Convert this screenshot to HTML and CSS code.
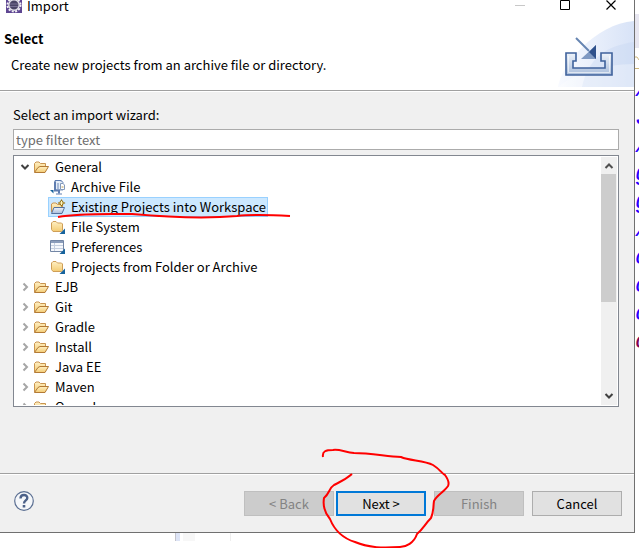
FILE: index.html
```html
<!DOCTYPE html>
<html lang="en">
<head>
  <meta charset="UTF-8" />
  <meta name="viewport" content="width=device-width, initial-scale=1.0" />
  <title>Import</title>
  <link rel="stylesheet" href="styles.css">
</head>
<body>
  <svg class="defs" aria-hidden="true">
    <defs>
      <linearGradient id="gold" x1="0" y1="0" x2="0" y2="1">
        <stop offset="0" stop-color="#fff0c4" />
        <stop offset="1" stop-color="#f3cb72" />
      </linearGradient>
      <linearGradient id="steel" x1="0" y1="0" x2="0" y2="1">
        <stop offset="0" stop-color="#eef3fa" />
        <stop offset="1" stop-color="#a9bddb" />
      </linearGradient>
    </defs>
    <symbol id="open" viewBox="0 0 16 16">
      <path d="M.5 13V4.500L2 3H5L6.500 4.500H11.500V7.500" fill="url(#gold)" stroke="#c99450" />
      <path d="M.5 13.500L4 8.500L6 7.500H14.500L11 13.500Z" fill="url(#gold)" stroke="#b37a36" stroke-linejoin="round" />
    </symbol>
    <symbol id="folder" viewBox="0 0 16 16">
      <path d="M1.500 10.500V4L3 2.500H6L7.500 4H11.500L12.500 5V11.500L11.500 12.500H3Z" fill="url(#gold)" stroke="#cf9f58" />
      <path d="M15 9.500V15H9.500Z" fill="#17639c" />
    </symbol>
    <symbol id="archive" viewBox="0 0 16 16">
      <path d="M5 1.500H10L13 3V11H5Z" fill="#e5edf7" stroke="#7f97c0" />
      <path d="M5 2.500V11.500H9V14.500" fill="none" stroke="#5f7db0" stroke-width="2" />
      <path d="M5 1.500H11.500M6 15H12" stroke="#5f7db0" />
      <path d="M8 4V10" stroke="#6f89b7" />
      <path d="M10.500 4.500H13L14.500 6V10.500H10.500Z" fill="#fff" stroke="#849abb" />
      <path d="M11.500 8H13.500" stroke="#b99a51" />
      <path d="M0 11H3.500V14.500Z" fill="#17639c" />
    </symbol>
    <symbol id="project" viewBox="0 0 16 16">
      <path d="M1.500 13V5L3 4H6L7.500 5.500H12.500V8" fill="url(#gold)" stroke="#c99450" />
      <path d="M1.500 14.500L4 8.500H14.500L12 14.500Z" fill="url(#steel)" stroke="#54729f" />
      <path d="M11.500 0L13 2.500L15.500 4L13 5.500L11.500 8L10 5.500L7.500 4L10 2.500Z" fill="#94731b" />
      <path d="M11.500 2V6M9.500 4H13.500" stroke="#fff6bd" />
    </symbol>
    <symbol id="prefs" viewBox="0 0 16 16">
      <path d="M.5 1.500H13.500V12.500H.5Z" fill="#f5f8fc" stroke="#7386a5" />
      <path d="M1 2H13V4H1Z" fill="#8b9dbb" />
      <path d="M4.500 4V12M1 6.500H13M1 9.500H13" stroke="#c5cfdf" />
      <path d="M15 9.500V15H9.500Z" fill="#17639c" />
    </symbol>
    <symbol id="down" viewBox="0 0 10 10"><path d="M1.500 3L5 6.500L8.500 3" fill="none" stroke="#404040" stroke-width="2" /></symbol>
    <symbol id="right" viewBox="0 0 10 10"><path d="M3.500 1.500L7 5L3.500 8.500" fill="none" stroke="#a6a6a6" stroke-width="2" /></symbol>
    <symbol id="up" viewBox="0 0 10 10"><path d="M1.500 7L5 3.500L8.500 7" fill="none" stroke="#505050" stroke-width="2" /></symbol>
  </svg>

  <div class="editor" aria-hidden="true">
    <div class="code"><i>/</i><i>J</i><i>/</i><i>g</i><i>g</i><i>/</i><i>o</i><i>o</i><i>o</i><i class="keyword">c</i></div>
    <svg class="outline" width="4" height="72" viewBox="0 0 4 72"><path d="M0 0H4V34H0Z" fill="#e7e6f0" /><path d="M0 43H2L4 46M0 54.500H4" fill="none" stroke="#ceb77c" /></svg>
    <div class="ruler"></div>
  </div>

  <main class="dialog">
    <div class="titlebar">
      <svg class="logo" width="16" height="16" viewBox="0 0 16 16">
        <path d="M0 0H16V16H0Z" fill="#5e4692" />
        <circle cx="8" cy="8" r="6.500" fill="none" stroke="#f2f0f5" stroke-width="2" stroke-dasharray="2 1.400" />
        <circle cx="8" cy="8" r="5.200" fill="#4a4466" stroke="#e3e1e9" stroke-width="1.400" />
        <path d="M4 7H12M4 9.500H12" stroke="#776f94" />
      </svg>
      <span class="caption">Import</span>
      <svg class="winbtns" width="102" height="12" viewBox="0 0 102 12">
        <path d="M0 5.500H10" stroke="#c8c8c8" />
        <path d="M45.500 .5H54.500V9.500H45.500Z" fill="none" stroke="#000" />
        <path d="M91.500 .5L100.500 9.500M100.500 .5L91.500 9.500" stroke="#000" stroke-width="1.200" />
      </svg>
    </div>

    <header class="banner">
      <div class="intro">
        <h1>Select</h1>
        <p>Create new projects from an archive file or directory.</p>
      </div>
      <svg class="art" width="76" height="68" viewBox="0 0 76 68">
        <defs>
          <linearGradient id="sky" x1="0" x2="1"><stop offset="0" stop-color="#f8faff" /><stop offset="1" stop-color="#d8e3f7" /></linearGradient>
        </defs>
        <path d="M0 67C3 45 37 4 76 1V67Z" fill="url(#sky)" />
        <path d="M24 67C30 39 47 26 76 22V67Z" fill="#c4d5f2" opacity=".35" />
        <path d="M0 67C20 51 45 45 76 44V67Z" fill="#fff" opacity=".3" />
        <path d="M8 33H18V41H15V48H47V41H43V33H54V55H8Z" fill="url(#steel)" stroke="#3f629c" stroke-width="1.600" />
        <path d="M10.500 36V52.500H51.500V36" fill="none" stroke="#fff" stroke-opacity=".6" />
        <path d="M18 18L31 31" stroke="#6685b2" stroke-width="2" />
        <path d="M38 25V39H23Z" fill="#7f99c2" />
        <path d="M38 25V39L31 32Z" fill="#2e508b" />
      </svg>
    </header>

    <section class="content">
      <label for="filter">Select an import wizard:</label>
      <input id="filter" type="text" placeholder="type filter text">
      <div class="tree">
        <ul class="items">
          <li><svg class="arrow"><use href="#down" /></svg><svg class="icon"><use href="#open" /></svg><span>General</span></li>
          <li class="child"><svg class="icon"><use href="#archive" /></svg><span>Archive File</span></li>
          <li class="child selected"><svg class="icon"><use href="#project" /></svg><span>Existing Projects into Workspace</span></li>
          <li class="child"><svg class="icon"><use href="#folder" /></svg><span>File System</span></li>
          <li class="child"><svg class="icon"><use href="#prefs" /></svg><span>Preferences</span></li>
          <li class="child"><svg class="icon"><use href="#folder" /></svg><span>Projects from Folder or Archive</span></li>
          <li><svg class="arrow"><use href="#right" /></svg><svg class="icon"><use href="#open" /></svg><span>EJB</span></li>
          <li><svg class="arrow"><use href="#right" /></svg><svg class="icon"><use href="#open" /></svg><span>Git</span></li>
          <li><svg class="arrow"><use href="#right" /></svg><svg class="icon"><use href="#open" /></svg><span>Gradle</span></li>
          <li><svg class="arrow"><use href="#right" /></svg><svg class="icon"><use href="#open" /></svg><span>Install</span></li>
          <li><svg class="arrow"><use href="#right" /></svg><svg class="icon"><use href="#open" /></svg><span>Java EE</span></li>
          <li><svg class="arrow"><use href="#right" /></svg><svg class="icon"><use href="#open" /></svg><span>Maven</span></li>
          <li><svg class="arrow"><use href="#right" /></svg><svg class="icon"><use href="#open" /></svg><span>Oomph</span></li>
        </ul>
        <div class="scrollbar">
          <svg class="arrow"><use href="#up" /></svg>
          <div class="track"><div class="thumb"></div></div>
          <svg class="arrow"><use href="#down" /></svg>
        </div>
      </div>
    </section>

    <footer class="actions">
      <button class="help" aria-label="Help">
        <svg width="20" height="20" viewBox="0 0 20 20">
          <circle cx="10" cy="10" r="9.300" fill="#f5f7fa" stroke="#5b6f92" stroke-width="1.200" />
          <path d="M6.500 7.500C6.500 3 13.500 3 13.300 7C13.200 9.500 10 9.500 10 12.500" fill="none" stroke="#4c6189" stroke-width="2.400" />
          <path d="M8.700 14H11.300V16.500H8.700Z" fill="#4c6189" />
        </svg>
      </button>
      <div class="pair">
        <button disabled>&lt; Back</button>
        <button class="primary">Next &gt;</button>
      </div>
      <button disabled>Finish</button>
      <button>Cancel</button>
    </footer>
  </main>

  <svg class="marks" width="639" height="548" viewBox="0 0 639 548" aria-hidden="true">
    <path d="M58 217C80 213 104 214 132 214C166 217 202 219 237 216C254 214 272 215 290 216" />
    <path d="M323 457C322 451 326 450 333 450C339 449 345 452 354 453C370 453 385 456 401 457C410 461 424 460 433 465C441 470 441 473 445 475Q450 482 448 486C444 492 437 495 434 501C433 507 434 511 431 518C425 524 423 529 417 534C414 543 406 547 400 547C383 548 369 548 355 542C342 538 334 529 330 519C324 512 323 504 324 498C330 493 329 488 334 485C340 482 345 480 352 474" />
  </svg>
</body>
</html>
```
FILE: styles.css
```css
* {
  box-sizing: border-box;
}
body {
  margin: 0;
  min-height: 100vh;
  padding-right: 4px;
  position: relative;
  overflow: hidden;
  background: #fff;
  color: #000;
  font-family: "Noto Sans CJK SC", "Noto Sans", sans-serif;
  font-size: 13px;
  line-height: 20px;
}
h1, p, ul {
  margin: 0;
  padding: 0;
}
.defs {
  position: absolute;
  width: 0;
  height: 0;
}

/* editor window peeking out behind the dialog */
.code {
  position: absolute;
  top: 76px;
  right: 0;
  width: 4px;
  overflow: hidden;
  color: #2a00ff;
  font: 24px/28px "Liberation Mono", monospace;
}
.code i {
  display: block;
}
.code .keyword {
  color: #7f0055;
}
.outline {
  position: absolute;
  top: 14px;
  right: 0;
}
.ruler {
  position: absolute;
  top: 533px;
  left: 175px;
  width: 56px;
  height: 8px;
  border-left: 1px solid #c4c4cc;
  border-right: 1px solid #eee;
  background: linear-gradient(to right, #dde4f6 4px, #fff 4px, #fff 7px, #f7f7f7 7px, #f7f7f7 19px, #fff 19px);
}

.dialog {
  position: relative;
  background: #f0f0f0;
  border-right: 1px solid #707070;
  border-bottom: 1px solid #707070;
}
.titlebar {
  display: flex;
  align-items: center;
  height: 12px;
  padding: 0 17px 0 6px;
  background: #fff;
}
.logo {
  margin-bottom: 2px;
}
.caption {
  flex: 1;
  margin-left: 5px;
}
.banner {
  display: flex;
  justify-content: space-between;
  height: 79px;
  padding-top: 8px;
  background: #fff;
  border-bottom: 1px solid #a0a0a0;
  box-shadow: 0 1px #fff;
}
.intro {
  padding: 9px 0 0 4px;
}
.intro h1 {
  font-size: 13px;
  line-height: 20px;
}
.intro p {
  padding: 6px 0 0 7px;
}
.content {
  display: flex;
  flex-direction: column;
  padding: 14px 15px 66px 13px;
}
.content input {
  width: 100%;
  height: 21px;
  margin-top: 4px;
  padding: 0 2px;
  border: 1px solid #ababab;
  background: #fff;
  font: inherit;
}
.content input::placeholder {
  color: #6d6d6d;
  opacity: 1;
}
.tree {
  display: flex;
  height: 252px;
  margin-top: 5px;
  padding: 1px;
  border: 1px solid #828790;
  background: #fff;
  overflow: hidden;
}
.items {
  flex: 1;
  overflow: hidden;
  list-style: none;
}
.items li {
  display: flex;
  align-items: center;
  width: max-content;
  height: 20px;
  padding: 0 2px 0 5px;
}
.items .child {
  margin-left: 33px;
  padding-left: 2px;
}
.items .selected {
  background: #cce8ff;
  outline: 1px solid #99d1ff;
  outline-offset: -1px;
}
.arrow {
  width: 10px;
  height: 10px;
}
.icon {
  width: 16px;
  height: 16px;
  margin-right: 5px;
}
.arrow + .icon {
  margin-left: 4px;
}
.scrollbar {
  display: flex;
  flex-direction: column;
  align-items: center;
  width: 16px;
  padding: 4px 0;
  background: #f0f0f0;
}
.track {
  flex: 1;
  width: 100%;
  padding: 3px 1px 3px 0;
}
.thumb {
  height: 128px;
  background: #cdcdcd;
}

.actions {
  display: flex;
  align-items: flex-start;
  gap: 8px;
  padding: 17px 12px 16px 14px;
  border-top: 1px solid #a0a0a0;
  box-shadow: inset 0 1px #fff;
}
.pair {
  display: flex;
  gap: 2px;
}
.actions button {
  width: 90px;
  height: 25px;
  padding: 0;
  border: 1px solid #adadad;
  background: #e1e1e1;
  color: #000;
  font: inherit;
}
.actions button:disabled {
  border-color: #bfbfbf;
  background: #ccc;
  color: #838383;
}
.actions .primary {
  border: 2px solid #0078d7;
}
.actions .help {
  display: flex;
  width: 20px;
  margin-right: auto;
  border: none;
  background: none;
}

/* pen marks */
.marks {
  position: absolute;
  top: 0;
  left: 0;
  fill: none;
  stroke: #f00;
  stroke-width: 2;
  pointer-events: none;
}
```
